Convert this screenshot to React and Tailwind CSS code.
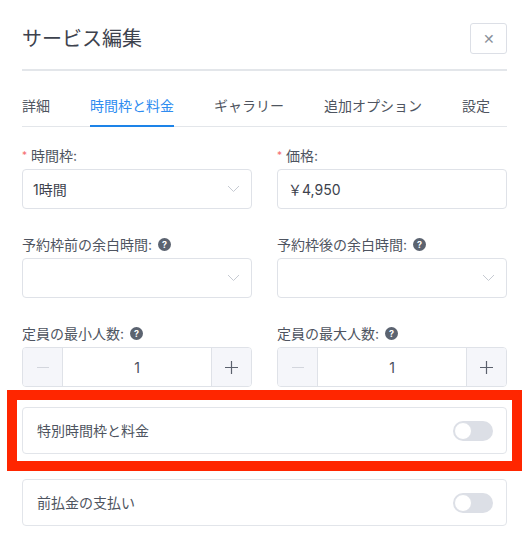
import React from "react";

const font = { fontFamily: 'Inter, "Noto Sans CJK JP", sans-serif' };

const Help = () => (
  <span className="ml-[6px] inline-flex h-[13px] w-[13px] items-center justify-center rounded-full bg-[#5b6370] text-[9px] font-bold leading-none text-white">
    ?
  </span>
);

const Chevron = () => (
  <svg width="13" height="8" viewBox="0 0 13 8" fill="none">
    <path d="M1 1l5.5 5.5L12 1" stroke="#c6cad2" strokeWidth="1" />
  </svg>
);

const Label = ({ children, required, help }) => (
  <div className="mb-[4px] flex h-[20px] items-center text-[14px] text-[#4e5460]">
    {required && <span className="mr-[4px] text-[10px] text-[#f56c6c]">*</span>}
    {children}
    {help && <Help />}
  </div>
);

const Select = ({ value }) => (
  <div className="flex h-[40px] items-center justify-between rounded-[4px] border border-[#dfe2e8] pl-[10px] pr-[11px] text-[14px] text-[#3d424d]">
    <span>{value}</span>
    <Chevron />
  </div>
);

const Stepper = () => (
  <div className="flex h-[40px] overflow-hidden rounded-[4px] border border-[#dfe2e8] text-[#4a505c]">
    <div className="flex w-[40px] items-center justify-center border-r border-[#dfe2e8] bg-[#f5f6fa]">
      <span className="block h-px w-[12px] bg-[#d3d6dd]" />
    </div>
    <div className="flex flex-1 items-center justify-center text-[14px]">1</div>
    <div className="flex w-[40px] items-center justify-center border-l border-[#dfe2e8] bg-[#f5f6fa]">
      <svg width="13" height="13" viewBox="0 0 13 13">
        <path d="M6.5 0v13M0 6.5h13" stroke="#5b616d" strokeWidth="1.2" />
      </svg>
    </div>
  </div>
);

const Toggle = () => (
  <div className="flex h-[20px] w-[40px] items-center rounded-full bg-[#dcdfe6] px-[1px]">
    <span className="block h-[18px] w-[18px] rounded-full border border-[#dcdfe6] bg-white" />
  </div>
);

const ToggleCard = ({ text }) => (
  <div className="flex h-[47px] items-center justify-between rounded-[4px] border border-[#e2e5ea] pl-[14px] pr-[13px] text-[14px] text-[#4e5460]">
    <span>{text}</span>
    <Toggle />
  </div>
);

export default function App() {
  const tabs = ["詳細", "時間枠と料金", "ギャラリー", "追加オプション", "設定"];
  return (
    <div className="min-h-[550px] w-[529px] bg-white px-[22px] pt-[22px]" style={font}>
      <div className="flex items-center justify-between">
        <h1 className="pt-[2px] text-[20px] leading-[31px] text-[#3d424d]">サービス編集</h1>
        <button className="flex h-[31px] w-[37px] items-center justify-center rounded-[3px] border border-[#dcdfe6] text-[14px] text-[#8a909a]">
          ✕
        </button>
      </div>
      <div className="mt-[14px] h-[2px] bg-[#e3e6ea]" />

      <div className="mt-[25px] flex gap-[40px] border-b border-[#e3e6ea] text-[14px]">
        {tabs.map((t, i) => (
          <div
            key={t}
            className={
              i === 1
                ? "-mb-px border-b-2 border-[#1d83e8] pb-[8px] leading-[20px] text-[#2e8cf0]"
                : "pb-[10px] leading-[20px] text-[#4f5560]"
            }
          >
            {t}
          </div>
        ))}
      </div>

      <div className="mt-[18px] grid grid-cols-2 gap-x-[25px]">
        <div>
          <Label required>時間枠:</Label>
          <Select value="1時間" />
        </div>
        <div>
          <Label required>価格:</Label>
          <div className="flex h-[40px] items-center rounded-[4px] border border-[#dfe2e8] px-[10px] text-[14px] text-[#3d424d]">
            ￥4,950
          </div>
        </div>

        <div className="mt-[25px]">
          <Label help>予約枠前の余白時間:</Label>
          <Select value="" />
        </div>
        <div className="mt-[25px]">
          <Label help>予約枠後の余白時間:</Label>
          <Select value="" />
        </div>

        <div className="mt-[25px]">
          <Label help>定員の最小人数:</Label>
          <Stepper />
        </div>
        <div className="mt-[25px]">
          <Label help>定員の最大人数:</Label>
          <Stepper />
        </div>
      </div>

      <div className="-mx-[15px] mt-[3px] border-[10px] border-[#ff2600] px-[5px] py-[7px]">
        <ToggleCard text="特別時間枠と料金" />
      </div>

      <div className="mt-[8px]">
        <ToggleCard text="前払金の支払い" />
      </div>
    </div>
  );
}
